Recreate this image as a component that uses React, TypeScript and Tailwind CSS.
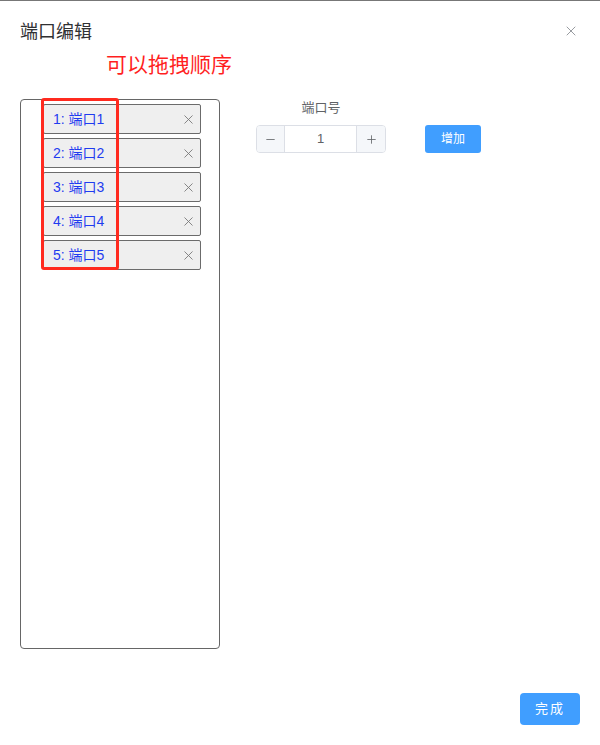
import { X, Minus, Plus } from 'lucide-react';

const ports = [1, 2, 3, 4, 5];

function PortItem({ n }: { n: number }) {
  return (
    <div className="h-[30px] w-[158px] flex items-center justify-between pl-[9px] pr-[4px] bg-[#efefef] border border-[#6b6b6b] rounded-[2px]">
      <span className="text-[14px] text-[#1f3cf0]">{n}: 端口{n}</span>
      <X className="w-[15px] h-[15px] text-[#777777]" strokeWidth={1.4} />
    </div>
  );
}

function PortNumber() {
  return (
    <div className="flex flex-col items-center w-[130px]">
      <span className="text-[13px] leading-[16px] text-[#606266]">端口号</span>
      <div className="mt-[9px] flex h-[28px] w-[130px] border border-[#dcdfe6] rounded-[4px] overflow-hidden">
        <div className="w-[28px] flex items-center justify-center bg-[#f5f7fa] border-r border-[#dcdfe6]">
          <Minus className="w-[13px] h-[13px] text-[#606266]" strokeWidth={1.5} />
        </div>
        <div className="flex-1 flex items-center justify-center text-[13px] text-[#606266] bg-white">1</div>
        <div className="w-[29px] flex items-center justify-center bg-[#f5f7fa] border-l border-[#dcdfe6]">
          <Plus className="w-[13px] h-[13px] text-[#606266]" strokeWidth={1.5} />
        </div>
      </div>
    </div>
  );
}

export default function App() {
  return (
    <div
      className="w-[600px] h-[745px] bg-white border-t border-[#777777] flex flex-col"
      style={{ fontFamily: '"Liberation Sans", "Noto Sans CJK SC", sans-serif' }}
    >
      {/* Header */}
      <div className="relative px-5 pt-[19px]">
        <h1 className="text-[18px] leading-[24px] text-[#303133]">端口编辑</h1>
        <X className="absolute right-[21px] top-[22px] w-[16px] h-[16px] text-[#909399]" strokeWidth={1.4} />
        <div className="mt-[7px] ml-[86px] text-[21px] leading-[28px] text-[#ff1f1f]">可以拖拽顺序</div>
      </div>

      {/* Body */}
      <div className="flex px-5 mt-[20px]">
        <div className="relative w-[200px] h-[550px] border border-[#666666] rounded-[4px] pt-[4px] pl-[22px] flex flex-col gap-[4px]">
          {ports.map((n) => (
            <PortItem key={n} n={n} />
          ))}
          {/* annotation */}
          <div className="absolute left-[20px] top-[-2px] w-[78px] h-[172px] border-[3px] border-[#ff2a1f] rounded-[3px]"></div>
        </div>

        <div className="flex items-start ml-[36px] pt-[1px]">
          <PortNumber />
          <button className="ml-[39px] mt-[25px] w-[56px] h-[28px] rounded-[3px] bg-[#409eff] text-white text-[12px]">
            增加
          </button>
        </div>
      </div>

      {/* Footer */}
      <div className="mt-auto flex justify-end px-5 pb-[20px]">
        <button className="w-[60px] h-[32px] rounded-[4px] bg-[#409eff] text-white text-[13px] tracking-[2px]">
          完成
        </button>
      </div>
    </div>
  );
}
